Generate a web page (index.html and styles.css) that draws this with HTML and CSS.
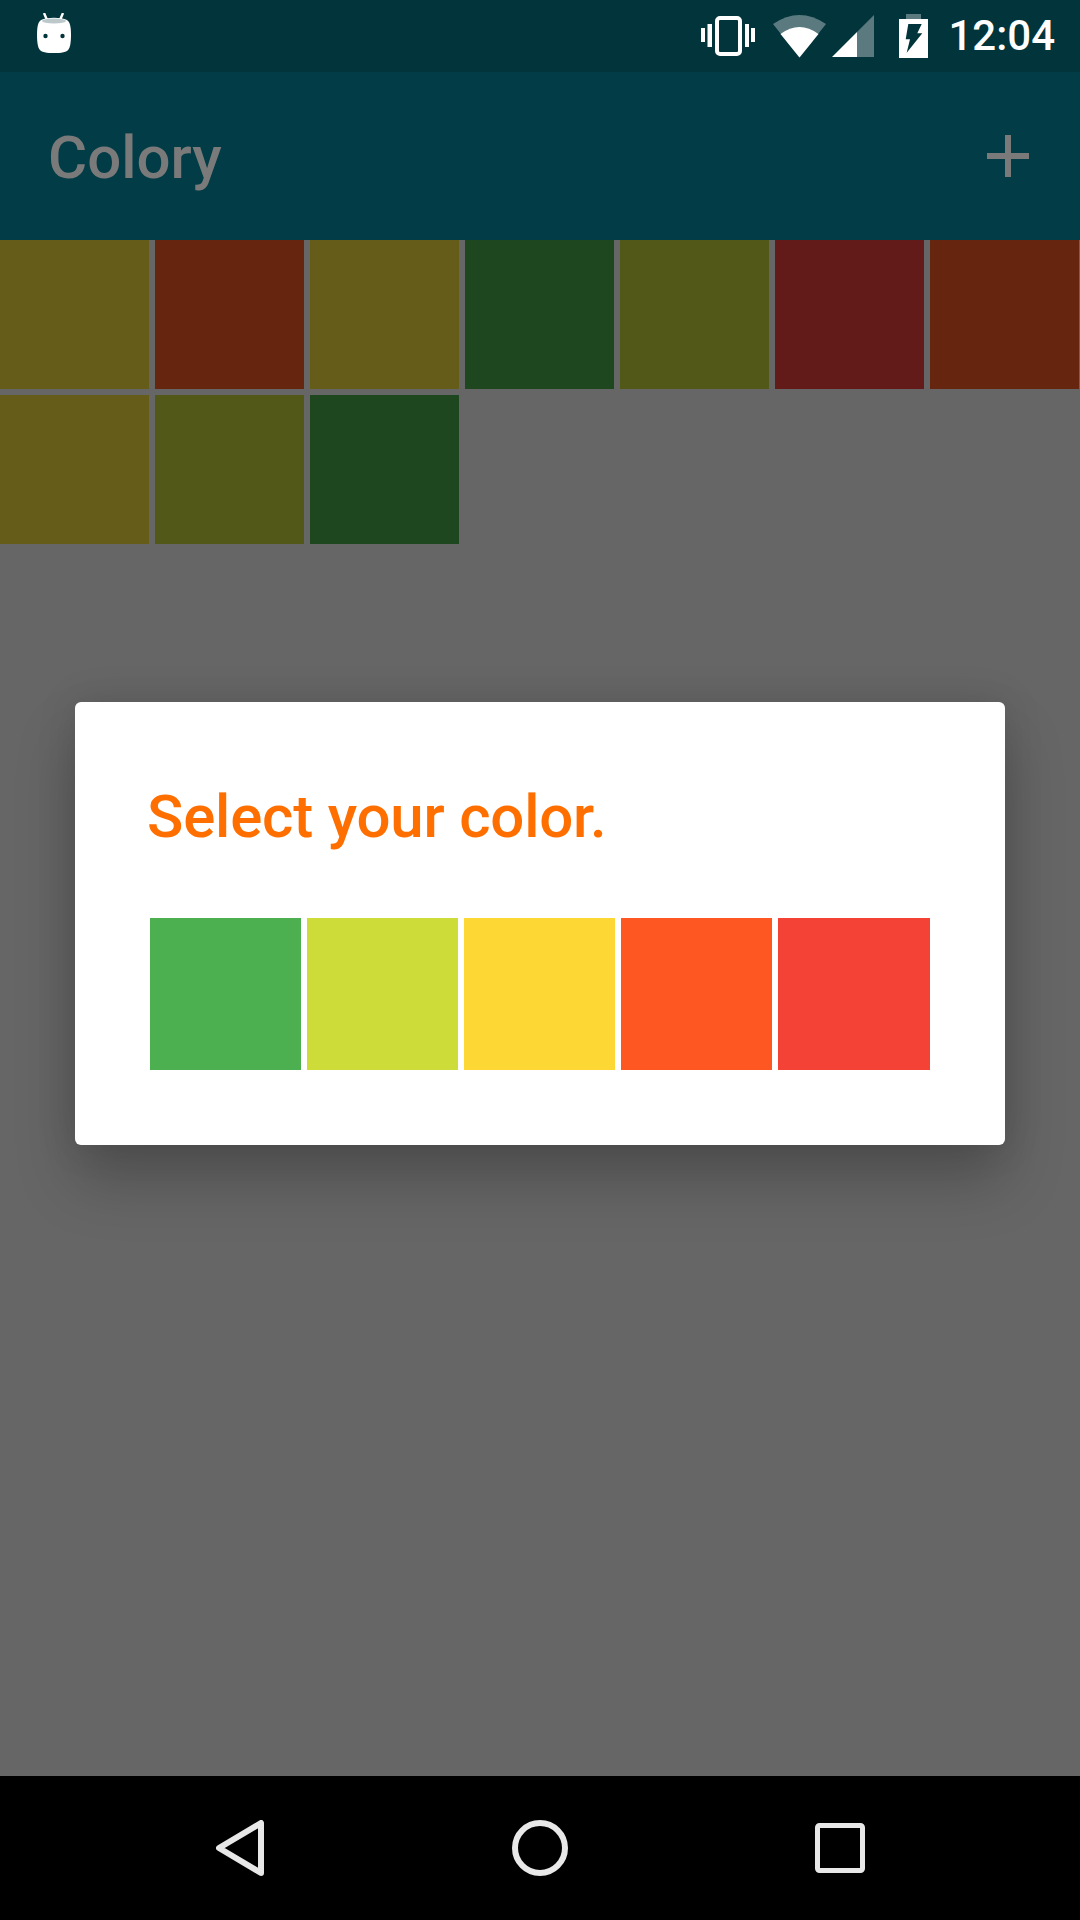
FILE: index.html
```html
<!DOCTYPE html>
<html lang="en">
<head>
    <meta charset="UTF-8">
    <meta name="viewport" content="width=device-width, initial-scale=1.0">
    <title>Colory</title>
    <link rel="stylesheet" href="styles.css">
</head>
<body>

    <div class="status-bar">
        <svg class="ic-robot" width="34" height="40" viewBox="0 0 34 40">
            <path d="M7 0L10 7M26 0L23 7" stroke="#fff" stroke-width="2.4" fill="none"/>
            <path d="M4 7C10 4 24 4 30 7C33 9 34 14 34 22C34 30 33 36 30 38C24 41 10 41 4 38C1 36 0 30 0 22C0 14 1 9 4 7Z" fill="#fff"/>
            <ellipse cx="17" cy="8" rx="12" ry="2.6" fill="#bcc8c9"/>
            <circle cx="8.5" cy="23" r="2.2" fill="#02343b"/>
            <circle cx="25.5" cy="23" r="2.2" fill="#02343b"/>
        </svg>

        <svg class="ic-vibrate" width="55" height="40" viewBox="0 0 55 40">
            <rect x="1" y="12" width="4" height="14" fill="#fff"/>
            <rect x="7.5" y="8" width="4.5" height="23" fill="#fff"/>
            <rect x="17" y="2" width="23" height="36" rx="3" stroke="#fff" stroke-width="4" fill="none"/>
            <rect x="45" y="8" width="4" height="23" fill="#fff"/>
            <rect x="51" y="12" width="4" height="14" fill="#fff"/>
        </svg>
        <svg class="ic-wifi" width="53" height="43" viewBox="0 0 53 43">
            <path d="M0 9Q26.5 -9 53 9L26.5 42.5Z" fill="#fff" fill-opacity="0.35"/>
            <path d="M7.5 19Q26.5 5 45.5 19L26.5 42.5Z" fill="#fff"/>
        </svg>
        <svg class="ic-signal" width="42" height="42" viewBox="0 0 42 42">
            <path d="M25 17L42 0V42H25Z" fill="#fff" fill-opacity="0.35"/>
            <path d="M0 42L25 17V42Z" fill="#fff"/>
        </svg>
        <svg class="ic-battery" width="29" height="44" viewBox="0 0 29 44">
            <rect x="7" y="0" width="15" height="5" fill="#fff" fill-opacity="0.35"/>
            <rect x="0" y="5" width="29" height="39" fill="#fff"/>
            <path d="M9.3 10H22.7L18.3 19.3H23.3L7.7 38.7L11 25.3H6.7Z" fill="#02343b"/>
        </svg>
        <span class="clock">12:04</span>
    </div>

    <div class="main">
        <div class="app-bar">
            <h1 class="app-title">Colory</h1>
            <div class="add-btn"></div>
        </div>

        <div class="color-grid">
            <div class="cell yellow"></div>
            <div class="cell orange"></div>
            <div class="cell yellow"></div>
            <div class="cell green"></div>
            <div class="cell lime"></div>
            <div class="cell red"></div>
            <div class="cell orange"></div>
            <div class="cell yellow"></div>
            <div class="cell lime"></div>
            <div class="cell green"></div>
        </div>

        <div class="dialog-wrap">
            <div class="dialog">
                <h2 class="dialog-title">Select your color.</h2>
                <div class="swatches">
                    <div class="swatch s-green"></div>
                    <div class="swatch s-lime"></div>
                    <div class="swatch s-yellow"></div>
                    <div class="swatch s-orange"></div>
                    <div class="swatch s-red"></div>
                </div>
            </div>
        </div>
    </div>

    <div class="nav-bar">
        <div class="nav-btn">
            <svg width="48" height="56" viewBox="0 0 48 56">
                <path d="M45 3V53L3 28Z" stroke="#e8e8e8" stroke-width="6" stroke-linejoin="round" fill="none"/>
            </svg>
        </div>
        <div class="nav-btn">
            <svg width="56" height="56" viewBox="0 0 56 56">
                <circle cx="28" cy="28" r="25" stroke="#e8e8e8" stroke-width="6" fill="none"/>
            </svg>
        </div>
        <div class="nav-btn">
            <svg width="50" height="50" viewBox="0 0 50 50">
                <rect x="2.5" y="2.5" width="45" height="45" rx="2" stroke="#e8e8e8" stroke-width="5" fill="none"/>
            </svg>
        </div>
    </div>

</body>
</html>
```

FILE: styles.css
```css
* {
    box-sizing: border-box;
}

body {
    font-family: Roboto, "Liberation Sans", sans-serif;
    margin: 0;
    width: 1080px;
    height: 1920px;
    display: flex;
    flex-direction: column;
    overflow: hidden;
    background-color: #666666;
}

/* status bar */
.status-bar {
    height: 72px;
    flex-shrink: 0;
    display: flex;
    align-items: center;
    padding: 0 25px 0 37px;
    background-color: #02343b;
}

.ic-robot {
    margin-top: -6px;
}

.ic-vibrate {
    margin-left: auto;
}

.ic-wifi {
    margin-left: 18px;
}

.ic-signal {
    margin-left: 6px;
}

.ic-battery {
    margin-left: 25px;
}

.clock {
    margin-left: 20px;
    color: #ffffff;
    font-size: 42px;
    font-weight: 500;
    line-height: 72px;
}

/* main area */
.main {
    flex: 1;
    position: relative;
}

.app-bar {
    height: 168px;
    display: flex;
    align-items: center;
    justify-content: space-between;
    padding: 0 51px 0 48px;
    background-color: #023d47;
}

.app-title {
    margin: 2px 0 0;
    font-size: 60px;
    font-weight: 500;
    color: #7a7a7a;
}

.add-btn {
    width: 42px;
    height: 42px;
    background:
        linear-gradient(#7a7a7a, #7a7a7a) center / 100% 6px no-repeat,
        linear-gradient(#7a7a7a, #7a7a7a) center / 6px 100% no-repeat;
}

.color-grid {
    display: grid;
    grid-template-columns: repeat(7, 149px);
    grid-auto-rows: 149px;
    gap: 6px;
}

.yellow {
    background-color: #665c19;
}

.orange {
    background-color: #66250e;
}

.green {
    background-color: #1e4720;
}

.lime {
    background-color: #525818;
}

.red {
    background-color: #621b18;
}

/* dialog */
.dialog-wrap {
    position: absolute;
    top: 0;
    left: 0;
    right: 0;
    bottom: 1px;
    display: flex;
    align-items: center;
    justify-content: center;
}

.dialog {
    width: 930px;
    height: 443px;
    padding: 80px 75px 0;
    background-color: #ffffff;
    border-radius: 6px;
    box-shadow: 0 36px 60px rgba(0, 0, 0, 0.22), 0 0 40px rgba(0, 0, 0, 0.12);
}

.dialog-title {
    margin: 0 0 66px -3px;
    font-size: 60px;
    font-weight: 500;
    line-height: 70px;
    letter-spacing: -0.2px;
    color: #ff6f00;
}

.swatches {
    display: grid;
    grid-template-columns: repeat(4, 151px) 152px;
    gap: 6px;
    height: 151px;
}

.s-green {
    background-color: #4caf50;
}

.s-lime {
    background-color: #cddc39;
}

.s-yellow {
    background-color: #fdd835;
}

.s-orange {
    background-color: #ff5722;
}

.s-red {
    background-color: #f44336;
    height: 152px;
}

/* navigation bar */
.nav-bar {
    height: 144px;
    flex-shrink: 0;
    display: flex;
    justify-content: center;
    align-items: center;
    background-color: #000000;
}

.nav-btn {
    width: 300px;
    display: flex;
    justify-content: center;
}
```
